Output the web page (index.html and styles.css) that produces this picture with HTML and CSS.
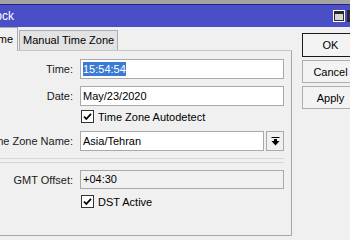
FILE: index.html
```html
<!DOCTYPE html>
<html lang="en">
<head>
  <meta charset="UTF-8">
  <title>Clock</title>
  <meta name="viewport" content="width=device-width, initial-scale=1">
  <link rel="stylesheet" href="styles.css">
</head>
<body>
  <div class="strip"></div>
  <div class="window">
    <div class="titlebar">
      <span class="title">Clock</span>
      <span class="tbtn">
        <svg width="12" height="12" viewBox="0 0 12 12">
          <rect x="0" y="0" width="12" height="12" fill="#fff"/>
          <rect x="1.5" y="1.5" width="9" height="9" fill="#d6d6d6" stroke="#2a2a2a"/>
          <rect x="2" y="2" width="8" height="2" fill="#2a2a2a"/>
        </svg>
      </span>
      <span class="tbtn close"></span>
    </div>
    <div class="main">
      <div class="left">
        <div class="tabs">
          <div class="tab active">Time</div>
          <div class="tab">Manual Time Zone</div>
        </div>
        <div class="panel">
          <div class="row">
            <span class="lbl">Time:</span>
            <div class="field"><span class="sel">15:54:54</span></div>
          </div>
          <div class="row date">
            <span class="lbl">Date:</span>
            <div class="field">May/23/2020</div>
          </div>
          <div class="row check">
            <span class="lbl"></span>
            <div class="cb">
              <span class="box">
                <svg width="11" height="11" viewBox="0 0 11 11"><path d="M2 5.5 L4.3 8 L9 2.8" fill="none" stroke="#000" stroke-width="1.8"/></svg>
              </span>
              Time Zone Autodetect
            </div>
          </div>
          <div class="row tz">
            <span class="lbl">Time Zone Name:</span>
            <div class="combo">
              <div class="field">Asia/Tehran</div>
              <span class="drop">
                <svg width="9" height="9" viewBox="0 0 9 9">
                  <rect x="0.5" y="0" width="8" height="1" fill="#000"/>
                  <rect x="3" y="2" width="3" height="2" fill="#000"/>
                  <path d="M0.5 4 H8.5 L4.5 8.5 Z" fill="#000"/>
                </svg>
              </span>
            </div>
          </div>
          <div class="sep"></div>
          <div class="row gmt">
            <span class="lbl">GMT Offset:</span>
            <div class="field ro">+04:30</div>
          </div>
          <div class="row check dst">
            <span class="lbl"></span>
            <div class="cb">
              <span class="box">
                <svg width="11" height="11" viewBox="0 0 11 11"><path d="M2 5.5 L4.3 8 L9 2.8" fill="none" stroke="#000" stroke-width="1.8"/></svg>
              </span>
              DST Active
            </div>
          </div>
        </div>
      </div>
      <div class="buttons">
        <button class="default">OK</button>
        <button>Cancel</button>
        <button>Apply</button>
      </div>
    </div>
  </div>
</body>
</html>
```

FILE: styles.css
```css
body {
  margin: 0;
  background: #f0f0f0;
  font-family: 'Liberation Sans', Arial, sans-serif;
  font-size: 11px;
  color: #000;
  overflow: hidden;
  width: 350px;
  height: 240px;
}
.strip {
  height: 4px;
  background: #a4a4a4;
}
.window {
  margin-left: -18px;
  width: 390px;
}
.titlebar {
  display: flex;
  align-items: center;
  height: 22px;
  border-top: 1px solid #262a7e;
  background: #4a4fc8;
  color: #fff;
  padding-left: 2px;
}
.title {
  flex: 1;
  font-size: 12px;
}
.tbtn {
  display: flex;
  width: 12px;
  height: 12px;
  margin-right: 2px;
}
.tbtn.close {
  background: #2a2a2a;
  margin-right: 13px;
}
.main {
  display: flex;
  align-items: flex-start;
}
.left {
  width: 310px;
}
.tabs {
  display: flex;
  align-items: flex-end;
  height: 23px;
}
.tab {
  height: 19px;
  line-height: 18px;
  padding: 0 3px;
  margin-left: 1px;
  border: 1px solid #adadad;
  border-bottom: none;
  background: #e3e3e3;
  white-space: nowrap;
}
.tab.active {
  position: relative;
  height: 23px;
  line-height: 22px;
  margin-left: 2px;
  margin-bottom: -1px;
  padding: 0 4px;
  background: #f0f0f0;
}
.panel {
  height: 176px;
  border: 1px solid #a8a8a8;
  border-top-color: #c6c6c6;
  padding: 8px 7px 0 0;
}
.row {
  display: grid;
  grid-template-columns: 90px 1fr;
  column-gap: 7px;
  align-items: center;
  height: 20px;
  margin-bottom: 7px;
}
.row.date {
  margin-bottom: 1px;
}
.row.check {
  height: 19px;
  margin-bottom: 5px;
}
.lbl {
  text-align: right;
  white-space: nowrap;
  color: #1a1a1a;
}
.field {
  height: 20px;
  box-sizing: border-box;
  border: 1px solid #a9a9a9;
  background: #fff;
  padding-left: 2px;
  line-height: 18px;
  white-space: nowrap;
}
.field.ro {
  height: 19px;
  line-height: 17px;
  background: #f0f0f0;
}
.sel {
  background: #3a7bd4;
  color: #fff;
  padding: 1px 0;
}
.combo {
  display: flex;
  gap: 2px;
}
.combo .field {
  flex: 1;
}
.drop {
  display: flex;
  align-items: center;
  justify-content: center;
  width: 18px;
  height: 20px;
  box-sizing: border-box;
  border: 1px solid #a9a9a9;
  background: #f0f0f0;
}
.sep {
  height: 3px;
  margin-top: 2px;
  margin-bottom: 7px;
  border-top: 1px solid #d6d6d6;
  border-bottom: 1px solid #d6d6d6;
}
.row.gmt {
  height: 19px;
  margin-bottom: 3px;
}
.cb {
  display: flex;
  align-items: center;
  gap: 4px;
  padding-left: 1px;
  white-space: nowrap;
}
.box {
  display: flex;
  align-items: center;
  justify-content: center;
  width: 13px;
  height: 13px;
  box-sizing: border-box;
  border: 1px solid #333;
  background: #fff;
}
.buttons {
  display: flex;
  flex-direction: column;
  gap: 3px;
  margin-left: 10px;
  margin-top: 6px;
}
button {
  width: 57px;
  height: 23px;
  border: 1px solid #adadad;
  background: #f3f3f3;
  font-family: inherit;
  font-size: 11px;
  color: #000;
  padding: 0;
}
button.default {
  height: 24px;
  border-color: #1a1a1a;
}
```
